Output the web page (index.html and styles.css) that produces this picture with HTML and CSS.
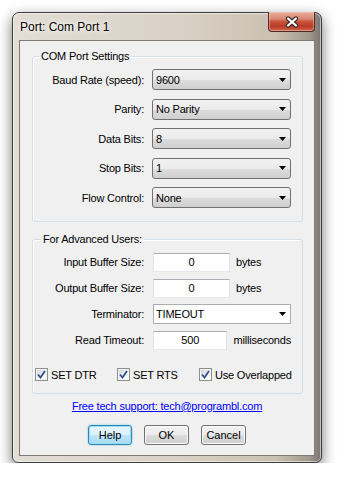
FILE: index.html
```html
<!DOCTYPE html>
<html lang="en">
<head>
  <meta charset="UTF-8">
  <title>Port: Com Port 1</title>
  <link rel="stylesheet" href="styles.css">
</head>
<body>
  <div class="window">
    <div class="titlebar">
      <span class="title">Port: Com Port 1</span>
      <div class="close-btn">
        <svg width="14" height="12" viewBox="0 0 14 12">
          <path d="M3 2.5 L11 9.5 M11 2.5 L3 9.5" stroke="#3b2a27" stroke-width="4.4" stroke-linecap="round"/>
          <path d="M3 2.5 L11 9.5 M11 2.5 L3 9.5" stroke="#ffffff" stroke-width="2.2" stroke-linecap="round"/>
        </svg>
      </div>
    </div>

    <div class="client">
      <fieldset class="group group-com">
        <legend>COM Port Settings</legend>
        <div class="form-grid">
          <label>Baud Rate (speed):</label>
          <div class="combo"><span>9600</span><svg class="arrow" width="7" height="4" viewBox="0 0 7 4"><polygon points="0,0 7,0 3.5,4" fill="#000"/></svg></div>

          <label>Parity:</label>
          <div class="combo"><span>No Parity</span><svg class="arrow" width="7" height="4" viewBox="0 0 7 4"><polygon points="0,0 7,0 3.5,4" fill="#000"/></svg></div>

          <label>Data Bits:</label>
          <div class="combo"><span>8</span><svg class="arrow" width="7" height="4" viewBox="0 0 7 4"><polygon points="0,0 7,0 3.5,4" fill="#000"/></svg></div>

          <label>Stop Bits:</label>
          <div class="combo"><span>1</span><svg class="arrow" width="7" height="4" viewBox="0 0 7 4"><polygon points="0,0 7,0 3.5,4" fill="#000"/></svg></div>

          <label>Flow Control:</label>
          <div class="combo"><span>None</span><svg class="arrow" width="7" height="4" viewBox="0 0 7 4"><polygon points="0,0 7,0 3.5,4" fill="#000"/></svg></div>
        </div>
      </fieldset>

      <fieldset class="group group-adv">
        <legend>For Advanced Users:</legend>
        <div class="form-grid adv-grid">
          <label>Input Buffer Size:</label>
          <div class="field-line"><div class="textbox">0</div><span>bytes</span></div>

          <label>Output Buffer Size:</label>
          <div class="field-line"><div class="textbox">0</div><span>bytes</span></div>

          <label>Terminator:</label>
          <div class="combo combo-white"><span>TIMEOUT</span><svg class="arrow" width="7" height="4" viewBox="0 0 7 4"><polygon points="0,0 7,0 3.5,4" fill="#000"/></svg></div>

          <label>Read Timeout:</label>
          <div class="field-line"><div class="textbox">500</div><span>milliseconds</span></div>
        </div>

        <div class="check-row">
          <div class="check-item">
            <span class="checkbox"><svg width="9" height="9" viewBox="0 0 9 9"><path d="M1 4.5 L3.5 7.5 L8 1" fill="none" stroke="#34508f" stroke-width="1.8"/></svg></span>
            <span>SET DTR</span>
          </div>
          <div class="check-item">
            <span class="checkbox"><svg width="9" height="9" viewBox="0 0 9 9"><path d="M1 4.5 L3.5 7.5 L8 1" fill="none" stroke="#34508f" stroke-width="1.8"/></svg></span>
            <span>SET RTS</span>
          </div>
          <div class="check-item">
            <span class="checkbox"><svg width="9" height="9" viewBox="0 0 9 9"><path d="M1 4.5 L3.5 7.5 L8 1" fill="none" stroke="#34508f" stroke-width="1.8"/></svg></span>
            <span>Use Overlapped</span>
          </div>
        </div>
      </fieldset>

      <div class="support">
        <a href="#">Free tech support: tech@programbl.com</a>
      </div>

      <div class="buttons">
        <button class="btn btn-focus">Help</button>
        <button class="btn">OK</button>
        <button class="btn">Cancel</button>
      </div>
    </div>
  </div>
</body>
</html>
```

FILE: styles.css
```css
body {
  margin: 0;
  background: #ffffff;
  font-family: "Liberation Sans", Arial, sans-serif;
  font-size: 11px;
  letter-spacing: -0.2px;
  color: #000;
}

/* ventana */
.window {
  box-sizing: border-box;
  width: 310px;
  height: 451px;
  margin: 12px 0 0 12px;
  padding: 0 6px 6px 6px;
  border: 1px solid #3e3b38;
  border-radius: 7px 7px 6px 6px;
  background: linear-gradient(to right, #e2ddd5 0%, #d9d1c5 55%, #cbc1b2 85%, #a39a8f 96%, #7a7571 100%);
  box-shadow: 0 5px 14px rgba(0, 0, 0, 0.55), inset 0 0 0 1px rgba(255, 255, 255, 0.55);
}

.titlebar {
  display: flex;
  justify-content: space-between;
  align-items: flex-start;
  height: 27px;
  padding-left: 1px;
}

.title {
  font-size: 12px;
  letter-spacing: 0;
  line-height: 14px;
  margin-top: 7px;
  color: #000;
  text-shadow: 0 0 6px #fff, 0 0 3px #fff;
}

.close-btn {
  box-sizing: border-box;
  width: 47px;
  height: 20px;
  margin-top: -1px;
  border: 1px solid #4d2a24;
  border-top: none;
  border-radius: 0 0 4px 4px;
  background: linear-gradient(#e6ab9b 0%, #d98a77 35%, #c9543c 50%, #b83b24 75%, #d0684e 100%);
  box-shadow: inset 0 0 0 1px rgba(255, 210, 195, 0.45);
  display: flex;
  align-items: center;
  justify-content: center;
}

.client {
  box-sizing: border-box;
  height: 416px;
  background: #f0f0f0;
  border: 1px solid #7f7a74;
  padding-top: 9px;
}

/* grupos */
.group {
  margin: 0 11px 0 12px;
  border: 1px solid #d5dfe5;
  border-radius: 3px;
  box-shadow: inset 1px 1px 0 #ffffff;
  min-width: 0;
}

.group legend {
  line-height: 13px;
  padding: 0 2px;
}

.group-com {
  padding: 6px 11px 13px 6px;
}

.group-adv {
  margin-top: 11px;
  padding: 6px 11px 11px 2px;
}

.group-adv legend {
  margin-left: 6px;
}

.form-grid {
  display: grid;
  grid-template-columns: 1fr 139px;
  grid-auto-rows: 21px;
  column-gap: 8px;
  row-gap: 8.5px;
  align-items: center;
}

.form-grid label {
  text-align: right;
  white-space: nowrap;
}

.adv-grid {
  grid-template-columns: 1fr 138px;
  grid-auto-rows: 20px;
  column-gap: 9px;
  row-gap: 6px;
}

.combo {
  box-sizing: border-box;
  height: 21px;
  display: flex;
  align-items: center;
  justify-content: space-between;
  padding: 0 4px 0 3px;
  border: 1px solid #707070;
  border-radius: 3px;
  background: linear-gradient(#f2f2f2 0%, #ebebeb 50%, #dddddd 51%, #cfcfcf 100%);
}

.combo-white {
  height: 20px;
  border: 1px solid #abadb3;
  border-radius: 0;
  background: #ffffff;
  padding-left: 2px;
}

.field-line {
  display: flex;
  align-items: center;
  gap: 6px;
  white-space: nowrap;
}

.textbox {
  box-sizing: border-box;
  width: 77px;
  height: 19px;
  line-height: 17px;
  text-align: center;
  background: #fff;
  border: 1px solid #e2e3ea;
  border-top-color: #abadb3;
  border-bottom-color: #e3e9ef;
}

/* casillas */
.check-row {
  display: grid;
  grid-template-columns: 82px 82px auto;
  margin-top: 17px;
  height: 15px;
  align-items: center;
}

.check-item {
  display: flex;
  align-items: center;
  gap: 3px;
  white-space: nowrap;
}

.checkbox {
  box-sizing: border-box;
  flex: none;
  width: 13px;
  height: 13px;
  border: 1px solid #8e8f8f;
  background: linear-gradient(135deg, #cbcfd5 0%, #f2f3f5 60%, #ffffff 100%);
  box-shadow: inset 0 0 0 1px #f4f4f4;
  display: flex;
  align-items: center;
  justify-content: center;
}

.support {
  margin-top: 6px;
  text-align: center;
  line-height: 13px;
}

.support a {
  color: #0000ff;
}

.buttons {
  display: flex;
  justify-content: center;
  gap: 12px;
  margin-top: 12px;
}

.btn {
  box-sizing: border-box;
  width: 45px;
  height: 20px;
  padding: 0;
  font-family: "Liberation Sans", Arial, sans-serif;
  font-size: 11px;
  color: #000;
  border: 1px solid #707070;
  border-radius: 3px;
  background: linear-gradient(#f2f2f2 0%, #ebebeb 50%, #dddddd 51%, #cfcfcf 100%);
  box-shadow: inset 0 0 0 1px #fcfcfc;
}

.btn-focus {
  width: 44px;
  border-color: #3c7fb1;
  background: linear-gradient(#eaf6fd 0%, #d9f0fc 50%, #bee6fd 51%, #a7d9f5 100%);
  box-shadow: inset 0 0 0 1px #8fe4fb, 0 0 2px #5bc8f0;
}
```
